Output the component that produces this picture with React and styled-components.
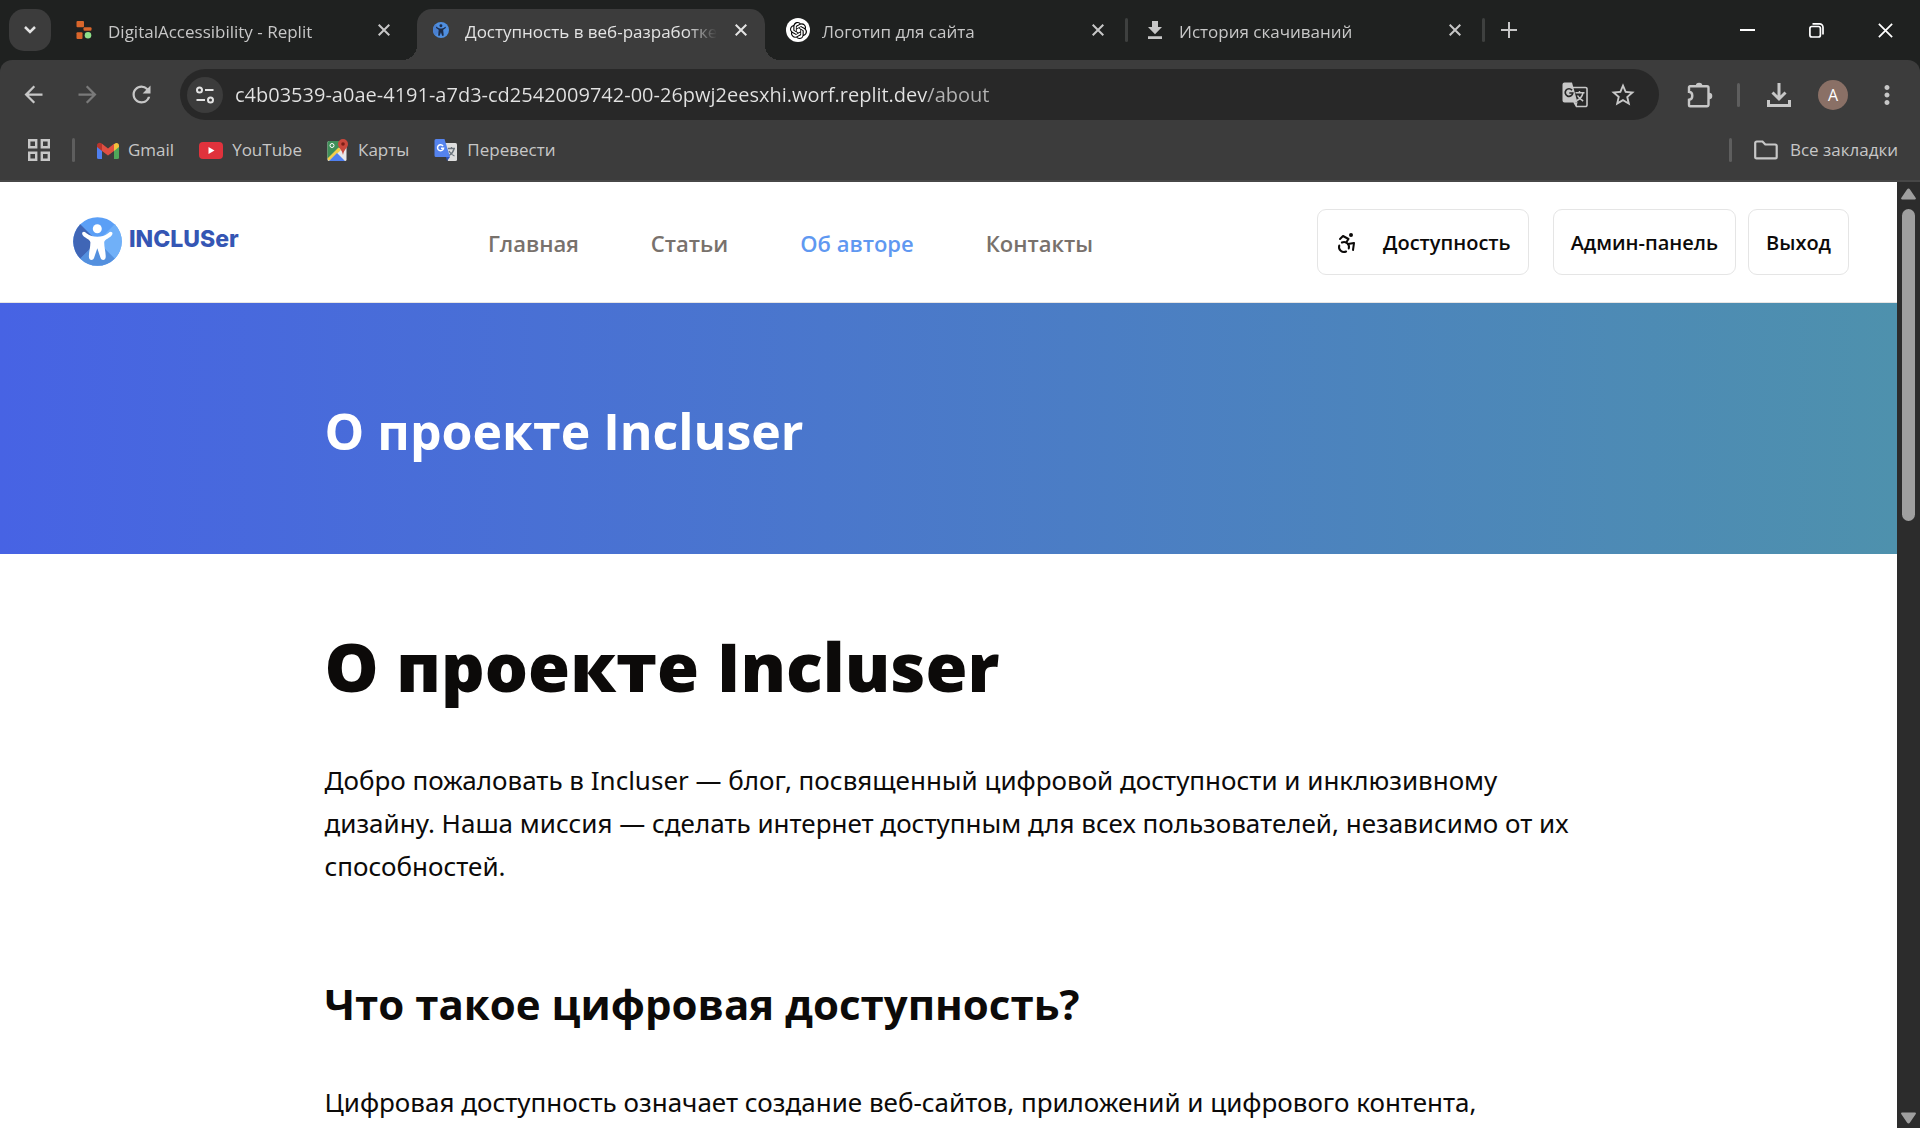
import React from "react";
import styled, { createGlobalStyle, css } from "styled-components";
import { Accessibility } from "lucide-react";
import { SiOpenai } from "react-icons/si";
import {
  MdArrowBack,
  MdArrowForward,
  MdRefresh,
  MdStarOutline,
  MdMoreVert,
} from "react-icons/md";

const color = {
  strip: "#1f2120",
  bar: "#3c3c3c",
  field: "#282828",
  icon: "#c7c7c7",
  text: "#c7c7c7",
  line: "#5e5e5e",
  ink: "#0c0a09",
  muted: "#78716c",
  accent: "#5f98f1",
  border: "#e5e5e5",
};

const GlobalStyle = createGlobalStyle`
  * { box-sizing: border-box; }
  html, body, #root { height: 100%; }
  body {
    margin: 0;
    overflow: hidden;
    font-family: "Open Sans", "Noto Sans", sans-serif;
    background: #fff;
  }
  button, input { font-family: inherit; }
  button { cursor: pointer; }
  svg { display: block; flex: none; }
`;

const Window = styled.div`
  display: flex;
  flex-direction: column;
  height: 100vh;
`;

/* ---------- tab strip ---------- */

const TabStrip = styled.div`
  display: flex;
  align-items: flex-end;
  height: 60px;
  flex: none;
  padding-left: 9px;
  background: ${color.strip};
`;

const plainButton = css`
  display: flex;
  align-items: center;
  justify-content: center;
  flex: none;
  padding: 0;
  border: 0;
  background: transparent;
  color: ${color.icon};
`;

const TabSearch = styled.button`
  ${plainButton}
  width: 42px;
  height: 42px;
  margin: 0 9px 9px 0;
  border-radius: 15px;
  background: ${color.bar};
  color: #e3e3e3;
`;

const Tabs = styled.div`
  display: flex;
  gap: 9px;
  min-width: 0;
`;

const foot = css`
  content: "";
  position: absolute;
  bottom: 0;
  width: 15px;
  height: 15px;
`;

const Tab = styled.div`
  position: relative;
  display: flex;
  align-items: center;
  gap: 12px;
  width: 348px;
  height: 51px;
  padding: 0 12px 9px;
  border-radius: 15px 15px 0 0;
  color: ${(p) => (p.$active ? "#e3e3e3" : color.text)};
  background: ${(p) => (p.$active ? color.bar : "transparent")};

  ${(p) =>
    p.$active &&
    css`
      &::before {
        ${foot}
        left: -15px;
        background: radial-gradient(circle at 0 0, transparent 15px, ${color.bar} 15px);
      }
      &::after {
        ${foot}
        right: -15px;
        background: radial-gradient(circle at 100% 0, transparent 15px, ${color.bar} 15px);
      }
    `}

  ${(p) =>
    p.$divided &&
    css`
      &::after {
        content: "";
        position: absolute;
        top: 9px;
        right: -6px;
        width: 3px;
        height: 24px;
        border-radius: 2px;
        background: #3e403f;
      }
    `}
`;

const TabIcon = styled.span`
  display: flex;
  align-items: center;
  justify-content: center;
  flex: none;
  width: 24px;
  height: 24px;
  border-radius: 50%;
  background: ${(p) => (p.$disc ? "#fff" : "transparent")};
  color: ${(p) => (p.$disc ? "#000" : color.icon)};
`;

const TabTitle = styled.span`
  flex: 1;
  min-width: 0;
  overflow: hidden;
  white-space: nowrap;
  padding-top: 3px;
  font-size: 17px;
  line-height: 24px;
  mask-image: linear-gradient(to right, #000 calc(100% - 30px), transparent);
`;

const TabClose = styled.button`
  ${plainButton}
  width: 24px;
  height: 24px;
  color: ${(p) => (p.$active ? "#e3e3e3" : color.icon)};
`;

const NewTab = styled.button`
  ${plainButton}
  width: 42px;
  height: 42px;
  margin: 0 auto 9px 9px;
`;

const WindowControls = styled.div`
  display: flex;
  align-self: flex-start;
`;

const WindowControl = styled.button`
  ${plainButton}
  width: 69px;
  height: 60px;
  color: #fff;
`;

/* ---------- toolbar ---------- */

const Chrome = styled.div`
  flex: none;
  background: ${color.strip};
`;

const ChromePanel = styled.div`
  border-radius: 12px 12px 0 0;
  background: ${color.bar};
  border-bottom: 2px solid #474747;
`;

const Toolbar = styled.div`
  display: flex;
  align-items: center;
  gap: 12px;
  height: 69px;
  padding: 0 12px;
`;

const ToolButton = styled.button`
  ${plainButton}
  width: 42px;
  height: 42px;
  color: ${(p) => (p.disabled ? "#7a7a7a" : color.icon)};
`;

const AddressBar = styled.div`
  display: flex;
  align-items: center;
  flex: 1;
  gap: 12px;
  height: 51px;
  margin: 0 8px 0 6px;
  padding: 0 24px 0 7px;
  border-radius: 26px;
  background: ${color.field};
`;

const SiteInfo = styled.button`
  ${plainButton}
  width: 36px;
  height: 36px;
  border-radius: 50%;
  background: ${color.bar};
  color: #e3e3e3;
`;

const Address = styled.input`
  flex: 1;
  min-width: 0;
  height: 36px;
  padding: 0;
  border: 0;
  outline: 0;
  font-size: 20px;
  background: linear-gradient(to right, #e3e3e3 693px, #b4b4b4 693px);
  -webkit-background-clip: text;
  background-clip: text;
  color: transparent;
`;

const FieldButton = styled.button`
  ${plainButton}
  width: 24px;
  height: 36px;
  margin-left: 12px;
`;

const Divider = styled.span`
  flex: none;
  width: 3px;
  height: 24px;
  margin: ${(p) => (p.$wide ? "0 6px 0 4px" : "0")};
  border-radius: 2px;
  background: ${color.line};
`;

const Avatar = styled.span`
  display: flex;
  align-items: center;
  justify-content: center;
  width: 30px;
  height: 30px;
  border-radius: 50%;
  background: #8a7066;
  color: #fff;
  font-size: 16px;
`;

/* ---------- bookmarks ---------- */

const Bookmarks = styled.nav`
  display: flex;
  align-items: center;
  gap: 22px;
  height: 51px;
  padding: 0 22px 9px 28px;
`;

const BookmarkList = styled.div`
  display: flex;
  flex: 1;
  gap: 25px;
`;

const Bookmark = styled.a`
  display: flex;
  align-items: center;
  gap: ${(p) => (p.$wide ? 12 : 9)}px;
  color: ${color.text};
  font-size: 17px;
  line-height: 24px;
  text-decoration: none;
  white-space: nowrap;
`;

/* ---------- page ---------- */

const Viewport = styled.div`
  display: flex;
  flex: 1;
  min-height: 0;
`;

const Page = styled.div`
  flex: 1;
  min-width: 0;
  overflow: hidden;
  background: #fff;
  color: ${color.ink};
`;

const SiteHeader = styled.header`
  display: flex;
  align-items: center;
  justify-content: space-between;
  height: 121px;
  padding: 0 48px;
  border-bottom: 1px solid #e7e5e4;
`;

const Logo = styled.a`
  display: flex;
  align-items: center;
  gap: 7px;
  width: 216px;
  padding: 0 0 2px 25px;
  text-decoration: none;
`;

const LogoText = styled.span`
  padding-bottom: 4px;
  color: #3556b4;
  font-family: Inter, sans-serif;
  font-size: 23px;
  font-weight: 800;
  line-height: 36px;
`;

const SiteNav = styled.nav`
  display: flex;
  gap: 72px;
  padding-top: 2px;
`;

const NavLink = styled.a`
  color: ${(p) => (p.$active ? color.accent : color.muted)};
  font-size: 22px;
  font-weight: 600;
  line-height: 36px;
  text-decoration: none;
`;

const Actions = styled.div`
  display: flex;
  gap: 12px;
`;

const ActionButton = styled.button`
  display: flex;
  align-items: center;
  gap: 24px;
  height: 66px;
  margin-right: ${(p) => (p.$spaced ? 12 : 0)}px;
  padding: 2px 17px 0;
  border: 1px solid ${color.border};
  border-radius: 9px;
  background: #fff;
  color: ${color.ink};
  font-size: 20px;
  font-weight: 600;
  line-height: 30px;
  white-space: nowrap;
`;

const Container = styled.div`
  max-width: 1344px;
  margin: 0 auto;
  padding: 0 36px 0 48px;
`;

const Hero = styled.section`
  padding: 98px 0 93px;
  background: linear-gradient(to right, #4763e4, #4e91ad);
`;

const HeroTitle = styled.h1`
  margin: 0;
  color: #fff;
  font-size: 50px;
  font-weight: 700;
  line-height: 60px;
`;

const Article = styled.article`
  padding: 76px 0;
`;

const Title = styled.h1`
  margin: 0 0 57px;
  font-size: 68px;
  font-weight: 800;
  line-height: 72px;
`;

const Heading = styled.h2`
  margin: 86px 0 47px;
  font-size: 42px;
  font-weight: 700;
  line-height: 60px;
`;

const Paragraph = styled.p`
  margin: 0;
  font-family: "Noto Sans", "Open Sans", sans-serif;
  font-size: 26px;
  line-height: 43px;
`;

const ScrollTrack = styled.div`
  display: flex;
  flex-direction: column;
  align-items: center;
  gap: 3px;
  flex: none;
  width: 23px;
  background: #2c2c2c;
`;

const ScrollArrow = styled.button`
  ${plainButton}
  width: 23px;
  height: ${(p) => (p.$down ? 20 : 24)}px;
  margin-top: ${(p) => (p.$down ? "auto" : 0)};
  color: #9f9f9f;
`;

const ScrollThumb = styled.div`
  width: 13px;
  height: 33%;
  border-radius: 7px;
  background: #9f9f9f;
`;

/* ---------- drawings ---------- */

const Cross = ({ size = 12, width = 2 }) => (
  <svg width={size} height={size} viewBox="0 0 12 12" stroke="currentColor" strokeWidth={width} fill="none">
    <path d="M0.7 0.7 11.3 11.3M11.3 0.7 0.7 11.3" />
  </svg>
);

const ReplitMark = () => (
  <svg width="16" height="18" viewBox="0 0 16 18">
    <rect x="0.5" y="0" width="7.5" height="6.3" rx="1" fill="#d9662b" />
    <rect x="7.5" y="6.3" width="8" height="3.4" rx="1" fill="#d9662b" />
    <rect x="0.5" y="11.3" width="6" height="6.7" rx="1" fill="#d9662b" />
    <circle cx="12" cy="14.3" r="3.3" fill="#8fe089" />
  </svg>
);

const PersonShape = ({ fill }) => (
  <g fill={fill}>
    <circle cx="24.3" cy="11.7" r="4.5" />
    <path d="M9.6 15.2c1.4-1.2 2.7-.3 4.2 1.4 3 2.6 6.3 3.2 10.5 3.2s7.5-.6 10.5-3.2c1.5-1.7 2.8-2.6 4.2-1.4 1.3 1.6-.3 3.6-2.3 5-2.3 1.7-5.5 2.8-5.5 5.3 0 5 1.6 9.3 1.5 14.5-.1 3.7-4.1 4-5.2.8l-3.2-9.6-3.2 9.6c-1.1 3.2-5.1 2.9-5.2-.8-.1-5.2 1.5-9.5 1.5-14.5 0-2.5-3.2-3.6-5.5-5.3-2-1.4-3.6-3.4-2.3-5z" />
  </g>
);

const LogoMark = () => (
  <svg width="49" height="49" viewBox="0 0 49 49">
    <defs>
      <clipPath id="disc">
        <circle cx="24.5" cy="24.5" r="24.3" />
      </clipPath>
    </defs>
    <g clipPath="url(#disc)">
      <rect width="49" height="49" fill="#5b9ff6" />
      <path d="M24.5 24.5 7 7H0v36h6z" fill="#4066b6" />
      <path d="M24.5 24.5 42 7h7v36h-6z" fill="#70b0f8" />
      <path d="M24.5 24.5 5 44v5h39v-5z" fill="#5490de" />
    </g>
    <PersonShape fill="#fff" />
  </svg>
);

const SiteFavicon = () => (
  <svg width="16" height="16" viewBox="0 0 49 49">
    <circle cx="24.5" cy="24.5" r="24.5" fill="#4f8fe0" />
    <path d="M7 7a24.5 24.5 0 0 0 0 35l17.5-17.5z" fill="#4a80d0" />
    <PersonShape fill="#1d2c48" />
  </svg>
);

const DownloadMark = () => (
  <svg width="14" height="18" viewBox="0 0 14 18" fill="currentColor">
    <path d="M4 0h6v6h4l-7 7.3L0 6h4zM0 15.3h14V18H0z" />
  </svg>
);

const Tune = () => (
  <svg width="18" height="18" viewBox="0 0 18 18" fill="none" stroke="currentColor" strokeWidth="2">
    <circle cx="3.5" cy="4" r="2.5" />
    <path d="M9 4h8.5M0.5 14H9" />
    <circle cx="14.5" cy="14" r="2.5" />
  </svg>
);

const TranslatePage = () => (
  <svg width="26" height="26" viewBox="0 0 26 26">
    <path d="M11 5.5h12.5a1.5 1.5 0 0 1 1.5 1.5v16a1.5 1.5 0 0 1-1.5 1.5H14.5L12 20" fill="none" stroke="#c7c7c7" strokeWidth="1.6" />
    <path d="M2.5 0.5H10l5.5 20h-13a2 2 0 0 1-2-2v-16a2 2 0 0 1 2-2z" fill="#c7c7c7" />
    <path d="M10 8.2a3.8 3.8 0 1 0 .8 2.8H7.3" fill="none" stroke="#282828" strokeWidth="1.7" />
    <path d="M13.5 10.8h9M17.5 9v1.8M21 11c-.8 3.4-3.2 6-6 7.5M15.5 13.5c1.2 2.4 3.3 4.3 5.7 5.5" fill="none" stroke="#c7c7c7" strokeWidth="1.5" />
    <path d="m12 20.5 3.5 0-1 4z" fill="#c7c7c7" />
  </svg>
);

const Puzzle = () => (
  <svg width="26" height="26" viewBox="0 0 26 26">
    <path d="M3 4.2h17a1.5 1.5 0 0 1 1.5 1.5v17.1a1.5 1.5 0 0 1-1.5 1.5H3a1 1 0 0 1-1-1v-5.5c4.4-.4 4.4-7.6 0-8V5.2a1 1 0 0 1 1-1z" fill="none" stroke="currentColor" strokeWidth="2.4" />
    <path d="M8.8 4a3.3 3.3 0 0 1 6.6 0zM22 10.8a3.3 3.3 0 0 1 0 6.6z" fill="currentColor" />
  </svg>
);

const Downloads = () => (
  <svg width="24" height="24" viewBox="0 0 24 24" fill="none" stroke="currentColor" strokeWidth="3">
    <path d="M12 0v15M5.5 9.5 12 16l6.5-6.5M1.5 17v5.5h21V17" />
  </svg>
);

const Apps = () => (
  <svg width="22" height="22" viewBox="0 0 22 22" fill="none" stroke={color.icon} strokeWidth="2.4">
    <path d="M1.2 1.2h7v7h-7zM13.8 1.2h7v7h-7zM1.2 13.8h7v7h-7zM13.8 13.8h7v7h-7z" />
  </svg>
);

const Gmail = () => (
  <svg width="22" height="17" viewBox="0 0 22 17">
    <path d="M0 4h5v13H1.5A1.5 1.5 0 0 1 0 15.5z" fill="#4f7fee" />
    <path d="M17 4h5v11.5a1.5 1.5 0 0 1-1.5 1.5H17z" fill="#4fa65a" />
    <path d="M17 2.2c2-2 5-1.4 5 1.3V5l-5 4z" fill="#f2c03c" />
    <path d="M0 3.5C0 .8 3-.2 5 1.7V9L0 5z" fill="#b8352c" />
    <path d="m5 1.7 6 4.8 6-4.8V9l-6 4.6L5 9z" fill="#e04f42" />
  </svg>
);

const YouTube = () => (
  <svg width="24" height="17" viewBox="0 0 24 17">
    <rect width="24" height="17" rx="4" fill="#e0323c" />
    <path d="m9.5 5 6 3.5-6 3.5z" fill="#fff" />
  </svg>
);

const Maps = () => (
  <svg width="22" height="22" viewBox="0 0 22 22">
    <rect x="0.5" y="2" width="19" height="20" rx="1.5" fill="#e8e8e8" />
    <path d="M2 2h14v4L0.5 20V3.5A1.5 1.5 0 0 1 2 2z" fill="#3f8f58" />
    <path d="m0.5 19.5 11-11 2.5 2.5L2 22z" fill="#f4cf4a" />
    <path d="m2 22 8-8 8 8z" fill="#4f7fee" />
    <circle cx="5" cy="6.5" r="2" fill="none" stroke="#fff" strokeWidth="1" />
    <path d="M16 0a5 5 0 0 1 5 5c0 4-4 5-5 11-1-6-5-7-5-11a5 5 0 0 1 5-5z" fill="#c9483c" />
    <circle cx="16" cy="5" r="1.8" fill="#7c1f18" />
  </svg>
);

const Translate = () => (
  <svg width="24" height="24" viewBox="0 0 24 24">
    <path d="M10 5h11.5A1.5 1.5 0 0 1 23 6.5v15a1.5 1.5 0 0 1-1.5 1.5H14z" fill="#dedede" />
    <path d="M14 10.5h7M17.5 9v1.5M20 11c-.7 3-2.5 5-5 6.5M15 13c1 2 3 4 5.5 5" fill="none" stroke="#6b747c" strokeWidth="1.3" />
    <path d="M2 1h8.5L16 19H2a1.5 1.5 0 0 1-1.5-1.5v-15A1.5 1.5 0 0 1 2 1z" fill="#5583ee" />
    <path d="m12 19h4l-3 4z" fill="#2d52b8" />
    <path d="M9 8a3 3 0 1 0 .5 2.3H7" fill="none" stroke="#fff" strokeWidth="1.5" />
  </svg>
);

const Folder = () => (
  <svg width="24" height="20" viewBox="0 0 24 20" fill="none" stroke={color.icon} strokeWidth="2.2">
    <path d="M1.2 17.2V3a1.5 1.5 0 0 1 1.5-1.5H8.5l2.8 3h9.9a1.5 1.5 0 0 1 1.5 1.5v11.2a1.2 1.2 0 0 1-1.2 1.2H2.4a1.2 1.2 0 0 1-1.2-1.2z" />
  </svg>
);

const Triangle = ({ down }) => (
  <svg width="15" height="12" viewBox="0 0 15 12" fill="currentColor">
    <path
      d={
        down
          ? "M1 0.5h13c1 0 1.2 1 .6 1.8L9 10.6c-.8 1.2-2.2 1.2-3 0L.4 2.3C-.2 1.5 0 .5 1 .5z"
          : "M1 11.5h13c1 0 1.2-1 .6-1.8L9 1.4C8.2.2 6.8.2 6 1.4L.4 9.7c-.6.8-.4 1.8.6 1.8z"
      }
    />
  </svg>
);

const tabs = [
  { title: "DigitalAccessibility - Replit", icon: <ReplitMark /> },
  { title: "Доступность в веб-разработке", icon: <SiteFavicon />, active: true },
  { title: "Логотип для сайта", icon: <SiOpenai size={17} />, disc: true, divided: true },
  { title: "История скачиваний", icon: <DownloadMark />, divided: true },
];

const bookmarks = [
  { label: "Gmail", icon: <Gmail /> },
  { label: "YouTube", icon: <YouTube /> },
  { label: "Карты", icon: <Maps /> },
  { label: "Перевести", icon: <Translate /> },
];

const links = ["Главная", "Статьи", "Об авторе", "Контакты"];

export default function App() {
  return (
    <Window>
      <GlobalStyle />
      <TabStrip>
        <TabSearch aria-label="Поиск вкладок">
          <svg width="12" height="8" viewBox="0 0 12 8" fill="none" stroke="currentColor" strokeWidth="2.5">
            <path d="m1 1 5 5 5-5" />
          </svg>
        </TabSearch>
        <Tabs>
          {tabs.map((tab) => (
            <Tab key={tab.title} $active={tab.active} $divided={tab.divided}>
              <TabIcon $disc={tab.disc}>{tab.icon}</TabIcon>
              <TabTitle>{tab.title}</TabTitle>
              <TabClose $active={tab.active} aria-label="Закрыть вкладку">
                <Cross />
              </TabClose>
            </Tab>
          ))}
        </Tabs>
        <NewTab aria-label="Новая вкладка">
          <svg width="16" height="16" viewBox="0 0 16 16" stroke="currentColor" strokeWidth="2">
            <path d="M8 0v16M0 8h16" />
          </svg>
        </NewTab>
        <WindowControls>
          <WindowControl aria-label="Свернуть">
            <svg width="15" height="2" viewBox="0 0 15 2">
              <rect width="15" height="2" fill="currentColor" />
            </svg>
          </WindowControl>
          <WindowControl aria-label="Свернуть в окно">
            <svg width="15" height="15" viewBox="0 0 15 15" fill="none" stroke="currentColor" strokeWidth="1.7">
              <rect x="0.9" y="3.5" width="10.5" height="10.5" rx="2" />
              <path d="M3.5 0.9h7a3.5 3.5 0 0 1 3.5 3.5v7" />
            </svg>
          </WindowControl>
          <WindowControl aria-label="Закрыть">
            <Cross size={15} width={1.4} />
          </WindowControl>
        </WindowControls>
      </TabStrip>

      <Chrome>
        <ChromePanel>
          <Toolbar>
            <ToolButton aria-label="Назад">
              <MdArrowBack size={27} />
            </ToolButton>
            <ToolButton aria-label="Вперёд" disabled>
              <MdArrowForward size={27} />
            </ToolButton>
            <ToolButton aria-label="Обновить">
              <MdRefresh size={27} />
            </ToolButton>
            <AddressBar>
              <SiteInfo aria-label="Сведения о сайте">
                <Tune />
              </SiteInfo>
              <Address
                aria-label="Адресная строка"
                defaultValue="c4b03539-a0ae-4191-a7d3-cd2542009742-00-26pwj2eesxhi.worf.replit.dev/about"
              />
              <FieldButton aria-label="Перевести страницу">
                <TranslatePage />
              </FieldButton>
              <FieldButton aria-label="Добавить в закладки">
                <MdStarOutline size={28} />
              </FieldButton>
            </AddressBar>
            <ToolButton aria-label="Расширения">
              <Puzzle />
            </ToolButton>
            <Divider $wide />
            <ToolButton aria-label="Загрузки">
              <Downloads />
            </ToolButton>
            <ToolButton aria-label="Профиль">
              <Avatar>А</Avatar>
            </ToolButton>
            <ToolButton aria-label="Меню">
              <MdMoreVert size={30} />
            </ToolButton>
          </Toolbar>
          <Bookmarks>
            <Apps />
            <Divider />
            <BookmarkList>
              {bookmarks.map((item) => (
                <Bookmark key={item.label} href="#">
                  {item.icon}
                  {item.label}
                </Bookmark>
              ))}
            </BookmarkList>
            <Divider />
            <Bookmark href="#" $wide>
              <Folder />
              Все закладки
            </Bookmark>
          </Bookmarks>
        </ChromePanel>
      </Chrome>

      <Viewport>
        <Page>
          <SiteHeader>
            <Logo href="#">
              <LogoMark />
              <LogoText>INCLUSer</LogoText>
            </Logo>
            <SiteNav>
              {links.map((label) => (
                <NavLink key={label} href="#" $active={label === "Об авторе"}>
                  {label}
                </NavLink>
              ))}
            </SiteNav>
            <Actions>
              <ActionButton $spaced>
                <Accessibility size={24} />
                Доступность
              </ActionButton>
              <ActionButton>Админ-панель</ActionButton>
              <ActionButton>Выход</ActionButton>
            </Actions>
          </SiteHeader>
          <Hero>
            <Container>
              <HeroTitle>О проекте Incluser</HeroTitle>
            </Container>
          </Hero>
          <Container>
            <Article>
              <Title>О проекте Incluser</Title>
              <Paragraph>
                Добро пожаловать в Incluser — блог, посвященный цифровой доступности и инклюзивному дизайну. Наша
                миссия — сделать интернет доступным для всех пользователей, независимо от их способностей.
              </Paragraph>
              <Heading>Что такое цифровая доступность?</Heading>
              <Paragraph>Цифровая доступность означает создание веб-сайтов, приложений и цифрового контента,</Paragraph>
            </Article>
          </Container>
        </Page>
        <ScrollTrack>
          <ScrollArrow aria-label="Прокрутить вверх">
            <Triangle />
          </ScrollArrow>
          <ScrollThumb />
          <ScrollArrow $down aria-label="Прокрутить вниз">
            <Triangle down />
          </ScrollArrow>
        </ScrollTrack>
      </Viewport>
    </Window>
  );
}
